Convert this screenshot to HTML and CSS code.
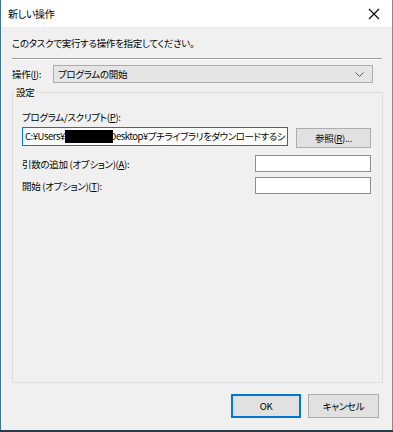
FILE: index.html
```html
<html>
<head>
	<title>新しい操作</title>
	<link rel="stylesheet" href="styles.css">
</head>
<body>
	<div class="window">
		<div class="titlebar">
			<span class="title">新しい操作</span>
			<svg class="close" width="12" height="12" viewBox="0 0 12 12">
				<path d="M1 1L11 11M11 1L1 11" stroke="#000" stroke-width="1.1" fill="none"/>
			</svg>
		</div>
		<div class="content">
			<p class="intro">このタスクで実行する操作を指定してください。</p>
			<div class="sep"></div>
			<div class="action-row">
				<label>操作(<u>I</u>):</label>
				<div class="combo">
					<span>プログラムの開始</span>
					<svg width="9" height="5" viewBox="0 0 9 5">
						<path d="M0.5 0.5L4.5 4.5L8.5 0.5" stroke="#606060" stroke-width="1" fill="none"/>
					</svg>
				</div>
			</div>
			<fieldset class="group">
				<legend>設定</legend>
				<label class="prog-label">プログラム/スクリプト(<u>P</u>):</label>
				<div class="prog-row">
					<div class="textbox focused">C:¥Users¥<span class="redact"></span>Desktop¥プチライブラリをダウンロードするシ</div>
					<button class="btn browse">参照(<u>R</u>)...</button>
				</div>
				<div class="opt-row">
					<label>引数の追加 (オプション)(<u>A</u>):</label>
					<div class="textbox small"></div>
				</div>
				<div class="opt-row second">
					<label>開始 (オプション)(<u>T</u>):</label>
					<div class="textbox small"></div>
				</div>
			</fieldset>
			<div class="footer">
				<button class="btn default">OK</button>
				<button class="btn cancel">キャンセル</button>
			</div>
		</div>
	</div>
</body>
</html>
```

FILE: styles.css
```css
body { margin: 0; background: #2b3a44; font-family: "Noto Sans CJK JP", "Noto Sans", sans-serif; font-size: 9.5px; letter-spacing: -0.3px; color: #000; font-feature-settings: "palt"; }
u { text-decoration: underline; text-underline-offset: 1px; }
.window { width: 391px; height: 430px; background: #f0f0f0; border-left: 1px solid #3d7693; border-right: 1px solid #8a8a8a; display: flex; flex-direction: column; }
.titlebar { height: 27px; background: #fff; display: flex; align-items: center; justify-content: space-between; padding: 0 12px 0 7px; flex: none; }
.title { font-size: 10px; line-height: 16px; }
.close { display: block; }
.content { flex: 1; display: flex; flex-direction: column; padding: 0 9px 0 11px; min-width: 0; }
.intro { margin: 8px 0 0 0; line-height: 16px; }
.sep { margin-top: 7px; border-top: 1px solid #a0a0a0; border-bottom: 1px solid #fff; margin-right: 1px; }
.action-row { display: flex; align-items: center; margin-top: 5px; height: 18px; }
.action-row label { width: 41px; }
.combo { flex: 1; margin-right: 10px; height: 16px; border: 1px solid #adadad; background: #e5e5e5; display: flex; align-items: center; justify-content: space-between; padding: 0 8px 0 4px; }
.combo svg { display: block; }
.group { flex: 1; min-width: 0; margin: 1px 0 0 0; border: 1px solid #dcdcdc; padding: 0 11px 0 9px; display: flex; flex-direction: column; }
.group legend { margin-left: -8px; padding: 0 2px; line-height: 16px; }
.prog-label { margin-top: 9px; line-height: 16px; }
.prog-row { display: flex; align-items: flex-start; gap: 8px; margin-top: 2px; min-width: 0; }
.textbox { height: 17px; border: 1px solid #8f8f8f; background: #fff; box-sizing: border-box; }
.textbox.focused { flex: 1; min-width: 0; height: 19px; border-color: #0078d7; padding: 0 2px; line-height: 17px; letter-spacing: -0.45px; white-space: nowrap; overflow: hidden; }
.redact { display: inline-block; width: 48px; height: 13px; background: #000; vertical-align: -3px; margin-right: -3px; }
.textbox.small { width: 116px; }
.opt-row { display: flex; align-items: center; justify-content: space-between; margin-top: 7px; }
.opt-row.second { margin-top: 5px; }
.btn { font-family: inherit; font-size: 9.5px; letter-spacing: -0.3px; color: #000; background: #e1e1e1; border: 1px solid #adadad; padding: 0; margin: 0; box-sizing: border-box; font-feature-settings: "palt"; flex: none; }
.browse { width: 75px; height: 20px; margin-top: 1px; }
.footer { display: flex; justify-content: flex-end; gap: 7px; padding: 11px 4px 12px 0; flex: none; }
.default { width: 70px; height: 24px; border: 2px solid #0078d7; }
.cancel { width: 71px; height: 24px; }
```
